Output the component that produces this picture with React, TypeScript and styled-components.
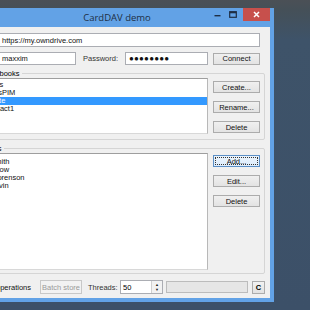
import styled, { createGlobalStyle } from "styled-components";

const GlobalStyle = createGlobalStyle`
  html, body {
    margin: 0;
    padding: 0;
  }
  body {
    font-family: "Liberation Sans", "DejaVu Sans", sans-serif;
    font-size: 8px;
    color: #000;
  }
`;

const Desktop = styled.div`
  position: relative;
  width: 310px;
  height: 310px;
  overflow: hidden;
  background: linear-gradient(180deg, #4b5056 0px, #455058 10px, #3e5369 40px, #3c5068 310px);
`;

const Window = styled.div`
  position: absolute;
  left: -49px;
  top: 8px;
  width: 323px;
  height: 294px;
  box-sizing: border-box;
  background: #62a2e6;
  padding: 0 4px 4px 4px;
  display: flex;
  flex-direction: column;
`;

const TitleBar = styled.div`
  position: relative;
  height: 19px;
  flex: none;
  padding-left: 9px;
  display: flex;
  align-items: center;
  justify-content: center;
`;

const Title = styled.span`
  font-family: "Open Sans", "DejaVu Sans", sans-serif;
  font-size: 9.5px;
  color: #1e2f45;
`;

const Controls = styled.div`
  position: absolute;
  right: 0;
  top: 0;
  display: flex;
  align-items: flex-start;
  gap: 2px;
  height: 13px;
`;

const CtrlBtn = styled.div<{ $close?: boolean }>`
  width: ${(p) => (p.$close ? "27px" : "14px")};
  height: 13px;
  margin-left: ${(p) => (p.$close ? "1px" : "0")};
  display: flex;
  align-items: center;
  justify-content: center;
  background: ${(p) => (p.$close ? "#c7504c" : "transparent")};
`;

const Body = styled.div`
  flex: 1;
  background: #f0f0f0;
  padding: 6px 5px 4px 6px;
  display: flex;
  flex-direction: column;
  min-height: 0;
`;

const Input = styled.div<{ $w?: number; $h?: number }>`
  height: ${(p) => p.$h ?? 14}px;
  box-sizing: border-box;
  border: 1px solid #abadb3;
  background: #fff;
  padding: 0 3px;
  display: flex;
  align-items: center;
  white-space: nowrap;
  overflow: hidden;
  font-size: 7.5px;
  color: #111;
  ${(p) => (p.$w ? `width: ${p.$w}px; flex: none;` : "flex: 1;")}
`;

const TopRow = styled.div<{ $mt?: number }>`
  display: flex;
  align-items: center;
  margin-right: 5px;
  margin-top: ${(p) => p.$mt ?? 0}px;
  gap: 5px;
`;

const FormLabel = styled.span`
  width: 32px;
  flex: none;
  font-size: 7.5px;
  white-space: nowrap;
  color: #333;
`;

const Label = styled.span`
  font-size: 7.5px;
  white-space: nowrap;
  color: #333;
  margin: 0 2px;
`;

const Dots = styled.span`
  font-size: 8px;
  letter-spacing: 0.2px;
  font-weight: bold;
`;

const Button = styled.div<{ $focus?: boolean; $disabled?: boolean; $h?: number; $w?: number }>`
  width: ${(p) => p.$w ?? 47}px;
  height: ${(p) => p.$h ?? 12}px;
  flex: none;
  box-sizing: border-box;
  border: 1px solid ${(p) => (p.$focus ? "#5b8fc6" : p.$disabled ? "#c8c8c8" : "#acacac")};
  background: ${(p) =>
    p.$focus
      ? "linear-gradient(#ebf4fc, #dcecfc)"
      : p.$disabled
      ? "#f2f2f2"
      : "linear-gradient(#f0f0f0, #e3e3e3)"};
  color: ${(p) => (p.$disabled ? "#9a9a9a" : "#111")};
  font-size: 7.5px;
  display: flex;
  align-items: center;
  justify-content: center;
  white-space: nowrap;
  outline: ${(p) => (p.$focus ? "1px dotted #333" : "none")};
  outline-offset: -3px;
`;

const GroupBox = styled.div<{ $mt: number; $grow?: boolean; $pb: number }>`
  margin-top: ${(p) => p.$mt}px;
  border: 1px solid #d5d5d5;
  border-radius: 2px;
  padding: 0 4px ${(p) => p.$pb}px 4px;
  display: flex;
  flex-direction: column;
  ${(p) => (p.$grow ? "flex: 1; min-height: 0;" : "")}
`;

const GroupTitle = styled.span`
  align-self: flex-start;
  margin-top: -5px;
  line-height: 9px;
  height: 9px;
  font-size: 7.5px;
  background: #f0f0f0;
  padding: 0 2px;
  margin-left: 4px;
  white-space: nowrap;
`;

const GroupContent = styled.div<{ $grow?: boolean }>`
  display: flex;
  gap: 5px;
  ${(p) => (p.$grow ? "flex: 1; min-height: 0;" : "")}
`;

const List = styled.div<{ $h?: number; $pt: number }>`
  flex: 1;
  box-sizing: border-box;
  ${(p) => (p.$h ? `height: ${p.$h}px;` : "")}
  border: 1px solid #9e9e9e;
  border-right-color: #b8b8b8;
  border-bottom-color: #d8d8d8;
  background: #fff;
  padding-top: ${(p) => p.$pt}px;
  overflow: hidden;
`;

const Item = styled.div<{ $selected?: boolean }>`
  height: 8px;
  line-height: 8px;
  font-size: 7.5px;
  padding-left: 5px;
  white-space: nowrap;
  background: ${(p) => (p.$selected ? "#3399ff" : "transparent")};
  color: ${(p) => (p.$selected ? "#fff" : "#111")};
`;

const ButtonColumn = styled.div<{ $pt: number }>`
  display: flex;
  flex-direction: column;
  gap: 8px;
  padding-top: ${(p) => p.$pt}px;
`;

const StatusRow = styled.div`
  margin-top: 6px;
  height: 14px;
  display: flex;
  align-items: center;
`;

const CheckLabel = styled.div`
  flex: 1;
  display: flex;
  justify-content: flex-end;
  align-items: center;
  gap: 3px;
  font-size: 7.5px;
  color: #111;
  white-space: nowrap;
  margin-right: 9px;
`;

const StatusLabel = styled.span`
  width: 27px;
  margin: 0 5px 0 6px;
  font-size: 7.5px;
  white-space: nowrap;
  color: #333;
`;

const SpinBox = styled.div`
  width: 43px;
  height: 14px;
  flex: none;
  box-sizing: border-box;
  border: 1px solid #abadb3;
  background: #fff;
  display: flex;
  align-items: stretch;
  font-size: 7.5px;
`;

const SpinValue = styled.span`
  flex: 1;
  padding-left: 2px;
  display: flex;
  align-items: center;
`;

const SpinArrows = styled.div`
  width: 10px;
  border-left: 1px solid #d0d0d0;
  background: #f2f2f2;
  display: flex;
  flex-direction: column;
  align-items: center;
  justify-content: center;
  font-size: 4px;
  line-height: 5px;
  color: #222;
`;

const Progress = styled.div`
  width: 82px;
  flex: none;
  height: 12px;
  box-sizing: border-box;
  border: 1px solid #bcbcbc;
  background: #e6e6e6;
  margin: 0 4px 0 3px;
`;

const SmallButton = styled.div`
  width: 13px;
  height: 13px;
  flex: none;
  box-sizing: border-box;
  border: 1px solid #acacac;
  background: linear-gradient(#f2f2f2, #e2e2e2);
  display: flex;
  align-items: center;
  justify-content: center;
  font-size: 7.5px;
  font-weight: bold;
`;

const books = ["Suppliers", "Shared sPIM", "Corporate", "My Contact1"];
const contacts = ["John Smith", "John Snow", "Linda Sorenson", "Mark Levin"];

export default function App() {
  return (
    <>
      <GlobalStyle />
      <Desktop>
        <Window>
          <TitleBar>
            <Title>CardDAV demo</Title>
            <Controls>
              <CtrlBtn>
                <svg width="7" height="7" viewBox="0 0 7 7">
                  <rect x="0.5" y="4" width="6" height="1.4" fill="#1e2f45" />
                </svg>
              </CtrlBtn>
              <CtrlBtn>
                <svg width="8" height="7" viewBox="0 0 8 7">
                  <rect x="0.7" y="0.7" width="6.6" height="5.6" fill="none" stroke="#1e2f45" strokeWidth="1.2" />
                  <rect x="0.7" y="0.7" width="6.6" height="1.6" fill="#1e2f45" />
                </svg>
              </CtrlBtn>
              <CtrlBtn $close>
                <svg width="7" height="7" viewBox="0 0 7 7">
                  <path d="M1 1 L6 6 M6 1 L1 6" stroke="#fff" strokeWidth="1.5" />
                </svg>
              </CtrlBtn>
            </Controls>
          </TitleBar>
          <Body>
            <TopRow>
              <FormLabel>URL:</FormLabel>
              <Input>https://my.owndrive.com</Input>
            </TopRow>
            <TopRow $mt={5}>
              <FormLabel>Login:</FormLabel>
              <Input $h={13}>maxxim</Input>
              <Label>Password:</Label>
              <Input $w={83} $h={13}>
                <Dots>●●●●●●●●</Dots>
              </Input>
              <Button>Connect</Button>
            </TopRow>

            <GroupBox $mt={8} $pb={5}>
              <GroupTitle>Addressbooks</GroupTitle>
              <GroupContent>
                <List $h={56} $pt={2}>
                  {books.map((b, i) => (
                    <Item key={b} $selected={i === 2}>
                      {b}
                    </Item>
                  ))}
                </List>
                <ButtonColumn $pt={3}>
                  <Button>Create...</Button>
                  <Button>Rename...</Button>
                  <Button>Delete</Button>
                </ButtonColumn>
              </GroupContent>
            </GroupBox>

            <GroupBox $mt={8} $pb={3} $grow>
              <GroupTitle>Contacts</GroupTitle>
              <GroupContent $grow>
                <List $pt={4}>
                  {contacts.map((c) => (
                    <Item key={c}>{c}</Item>
                  ))}
                </List>
                <ButtonColumn $pt={2}>
                  <Button $focus>Add...</Button>
                  <Button>Edit...</Button>
                  <Button>Delete</Button>
                </ButtonColumn>
              </GroupContent>
            </GroupBox>

            <StatusRow>
              <CheckLabel>
                <input type="checkbox" style={{ width: 9, height: 9, margin: 0 }} />
                Batch operations
              </CheckLabel>
              <Button $disabled $h={14} $w={42}>
                Batch store
              </Button>
              <StatusLabel>Threads:</StatusLabel>
              <SpinBox>
                <SpinValue>50</SpinValue>
                <SpinArrows>
                  <span>▲</span>
                  <span>▼</span>
                </SpinArrows>
              </SpinBox>
              <Progress />
              <SmallButton>C</SmallButton>
            </StatusRow>
          </Body>
        </Window>
      </Desktop>
    </>
  );
}
